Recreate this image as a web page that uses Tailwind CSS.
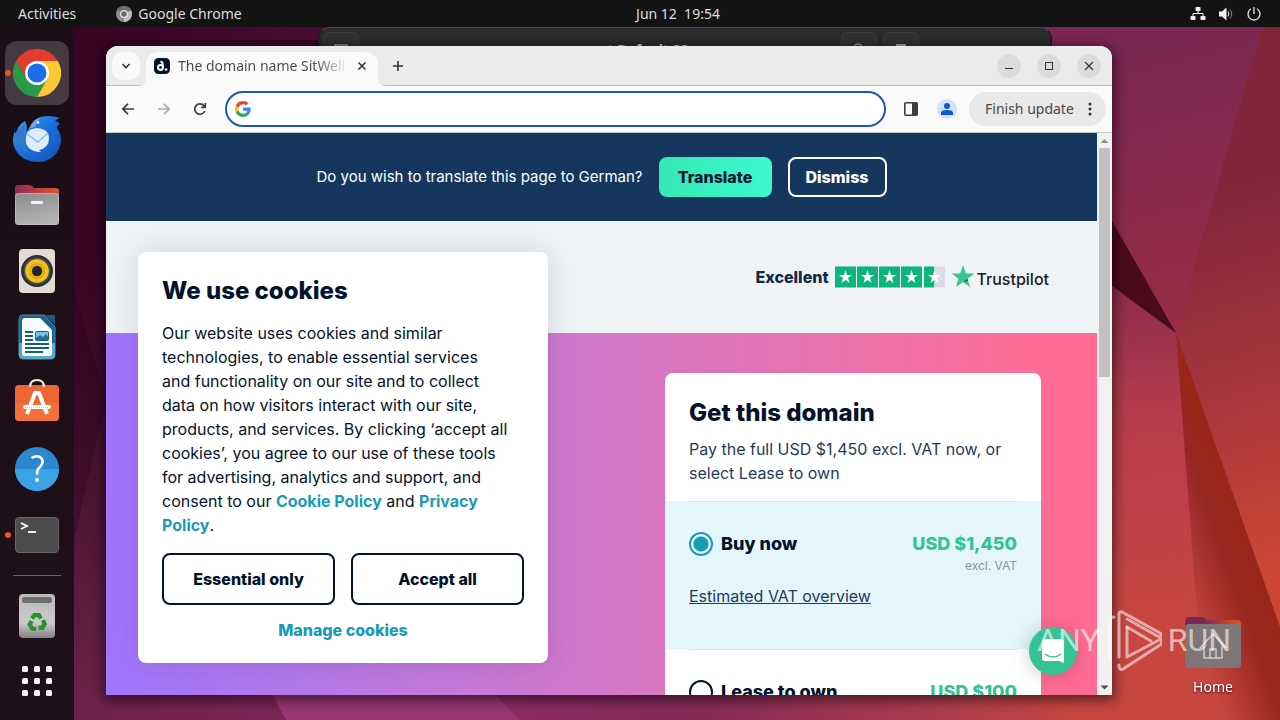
<!DOCTYPE html>
<html lang="en">
<head>
    <meta charset="UTF-8">
    <meta name="viewport" content="width=device-width, initial-scale=1.0">
    <title>Ubuntu Desktop - Google Chrome</title>
    <script src="https://cdn.jsdelivr.net/npm/@tailwindcss/browser@4"></script>
</head>
<body class="relative flex h-screen flex-col overflow-hidden bg-[#3a0525] font-['Noto_Sans',sans-serif] text-sm">

    <!-- Wallpaper -->
    <svg class="absolute inset-0 h-full w-full" viewBox="0 0 1280 720" preserveAspectRatio="none" aria-hidden="true">
        <defs>
            <linearGradient id="wpTop" x1="0" x2="1" y1="0" y2="0">
                <stop offset="0.05" stop-color="#350322"/>
                <stop offset="0.25" stop-color="#4a0c36"/>
                <stop offset="0.84" stop-color="#7d2650"/>
                <stop offset="1" stop-color="#86284a"/>
            </linearGradient>
            <linearGradient id="wpLeft" x1="0" x2="0" y1="0" y2="1">
                <stop offset="0.3" stop-color="#360422"/>
                <stop offset="0.65" stop-color="#48142f"/>
                <stop offset="1" stop-color="#70234d"/>
            </linearGradient>
            <linearGradient id="wpUpper" gradientUnits="userSpaceOnUse" x1="1110" y1="60" x2="1180" y2="330">
                <stop offset="0" stop-color="#7a2652"/>
                <stop offset="1" stop-color="#982d44"/>
            </linearGradient>
            <linearGradient id="wpRight" gradientUnits="userSpaceOnUse" x1="1180" y1="200" x2="1290" y2="560">
                <stop offset="0" stop-color="#80253a"/>
                <stop offset="0.5" stop-color="#a5353c"/>
                <stop offset="1" stop-color="#cc4634"/>
            </linearGradient>
            <linearGradient id="wpLower" gradientUnits="userSpaceOnUse" x1="1120" y1="280" x2="1150" y2="620">
                <stop offset="0" stop-color="#8a2a4a"/>
                <stop offset="0.4" stop-color="#b53c4c"/>
                <stop offset="1" stop-color="#c84640"/>
            </linearGradient>
            <linearGradient id="wpShade" gradientUnits="userSpaceOnUse" x1="1190" y1="620" x2="1262" y2="595">
                <stop offset="0" stop-color="#8c2119" stop-opacity="0"/>
                <stop offset="0.7" stop-color="#8c2119" stop-opacity="0.8"/>
                <stop offset="1" stop-color="#9a2619"/>
            </linearGradient>
            <linearGradient id="wpBottom" x1="0" x2="1" y1="0" y2="0">
                <stop offset="0.05" stop-color="#6c204b"/>
                <stop offset="0.4" stop-color="#8a2b62"/>
                <stop offset="0.55" stop-color="#862a58"/>
                <stop offset="0.75" stop-color="#b03e4c"/>
                <stop offset="0.84" stop-color="#c84640"/>
                <stop offset="0.88" stop-color="#c84640" stop-opacity="0"/>
            </linearGradient>
        </defs>
        <rect width="1280" height="720" fill="url(#wpTop)"/>
        <rect y="40" width="320" height="680" fill="url(#wpLeft)"/>
        <path d="M74 290L106 400 74 540Z" fill="#2c041c" opacity=".35"/>
        <path d="M1000 27H1261L1176 333 1000 60Z" fill="url(#wpUpper)"/>
        <path d="M1262 27H1280V627L1176 333Z" fill="url(#wpRight)"/>
        <path d="M1000 200L1176 333 1280 627V720H1000Z" fill="url(#wpLower)"/>
        <path d="M1176 333L1280 627V720H1205Z" fill="url(#wpShade)"/>
        <path d="M1080 165L1176 333 1100 277Z" fill="#490b1c"/>
        <rect y="694" width="1280" height="26" fill="url(#wpBottom)"/>
        <path d="M265 680H480L520 720H286Z" fill="#9a3672"/>
    </svg>

    <!-- Top bar -->
    <header class="relative grid h-[27px] shrink-0 grid-cols-3 items-center bg-[#131313] px-[18px] text-[#dedede]">
        <div class="flex items-center gap-10">
            <button type="button">Activities</button>
            <button type="button" class="flex items-center gap-1.5">
                <svg class="size-4" viewBox="0 0 16 16" aria-hidden="true">
                    <circle cx="8" cy="8" r="8" fill="#8d8d8d"/>
                    <path d="M8 8L1 4.200A8 8 0 0 1 15 4.200Z" fill="#6f6f6f"/>
                    <path d="M8 8L15 4.200A8 8 0 0 1 8 16Z" fill="#bdbdbd"/>
                    <circle cx="8" cy="8" r="4" fill="#e8e8e8"/>
                    <circle cx="8" cy="8" r="2.800" fill="#6a6a6a"/>
                </svg>
                Google Chrome
            </button>
        </div>
        <button type="button" class="justify-self-center whitespace-pre pl-19">Jun 12  19:54</button>
        <div class="flex items-center gap-3 justify-self-end">
            <button type="button" aria-label="Network">
                <svg class="size-4" viewBox="0 0 16 16" fill="#f2f2f2" aria-hidden="true">
                    <rect x="5.500" y="1" width="5" height="4" rx=".8"/>
                    <rect x="0.500" y="10" width="5" height="4" rx=".8"/>
                    <rect x="10.500" y="10" width="5" height="4" rx=".8"/>
                    <path d="M8 5V7.500M3 10V7.500H13V10" fill="none" stroke="#f2f2f2"/>
                </svg>
            </button>
            <button type="button" aria-label="Volume">
                <svg class="size-4" viewBox="0 0 16 16" fill="none" aria-hidden="true">
                    <path d="M1 5.500H4L8.500 1.500V14.500L4 10.500H1Z" fill="#f2f2f2"/>
                    <path d="M10 5.500Q11.800 8 10 10.500" stroke="#f2f2f2"/>
                    <path d="M12 3.500Q15.500 8 12 12.500" stroke="#8a8a8a"/>
                </svg>
            </button>
            <button type="button" aria-label="Power">
                <svg class="size-4" viewBox="0 0 16 16" fill="none" stroke="#e4e4e4" stroke-width="1.300" aria-hidden="true">
                    <path d="M8 1V8M5 2.800A6 6 0 1 0 11 2.800"/>
                </svg>
            </button>
        </div>
    </header>

    <div class="relative flex min-h-0 flex-1">

        <!-- Dock -->
        <nav aria-label="Dock" class="flex w-[74px] shrink-0 flex-col items-center gap-0.5 bg-[#1b0f17]/95 pt-3.5 pb-2">
            <button type="button" aria-label="Google Chrome" class="relative flex size-16 shrink-0 items-center justify-center rounded-xl bg-[#463a42]">
                <span class="absolute left-0 size-1.5 rounded-full bg-[#e95420]"></span>
                <svg class="size-12" viewBox="0 0 48 48" aria-hidden="true">
                    <path d="M24 12H44.800A24 24 0 0 0 3.200 12L13.600 30Z" fill="#e33b2e"/>
                    <path d="M13.600 30L3.200 12A24 24 0 0 0 24 48L34.400 30Z" fill="#2a9a48"/>
                    <path d="M34.400 30L24 48A24 24 0 0 0 44.800 12H24Z" fill="#fcc934"/>
                    <circle cx="24" cy="24" r="12" fill="#fff"/>
                    <circle cx="24" cy="24" r="9.500" fill="#1a6ee8"/>
                </svg>
            </button>
            <button type="button" aria-label="Thunderbird" class="flex size-16 shrink-0 items-center justify-center">
                <svg class="size-12" viewBox="0 0 48 48" aria-hidden="true">
                    <defs>
                        <linearGradient id="bird" x1="0" x2="1" y1="0" y2="1">
                            <stop offset="0" stop-color="#3aa5f5"/>
                            <stop offset="0.5" stop-color="#1a6fd8"/>
                            <stop offset="1" stop-color="#1450b8"/>
                        </linearGradient>
                    </defs>
                    <path d="M12 6Q15 12 13 17L17 12Q21 1 35 1Q42 1 47 3Q44 4 42 6Q46 7 47 9Q44 10 44 13Q50 22 47 31A23 23 0 0 1 24 47C10 47 0 36 0 25Q0 20 2 16V22Q5 9 12 6Z" fill="url(#bird)"/>
                    <path d="M17 12Q20 5 27 3Q23 8 22 12Q19 12 16 14Z" fill="#8a9fe0"/>
                    <path d="M1 20Q5 33 17 39Q7 27 12 10Q4 15 1 20Z" fill="#3478cc"/>
                    <circle cx="25" cy="7.500" r="1.300" fill="#fff"/>
                    <path d="M13 22Q13 14 24 13Q36 14 36 23Q36 33 26 35L28 37Q19 37 15 32Q12 28 13 22Z" fill="#dceefb"/>
                    <path d="M14 19L25 27 35 18" fill="none" stroke="#8fb8dc" stroke-width="1.500"/>
                </svg>
            </button>
            <button type="button" aria-label="Files" class="flex size-16 shrink-0 items-center justify-center">
                <svg class="size-12" viewBox="0 0 48 48" aria-hidden="true">
                    <defs>
                        <linearGradient id="folderBack" x1="0" x2="1" y1="0" y2="0">
                            <stop offset="0" stop-color="#8d2c55"/>
                            <stop offset="1" stop-color="#e6502a"/>
                        </linearGradient>
                        <linearGradient id="folderFront" x1="0" x2="0.300" y1="0" y2="1">
                            <stop offset="0" stop-color="#8b8b8b"/>
                            <stop offset="1" stop-color="#b2b2b2"/>
                        </linearGradient>
                    </defs>
                    <path d="M2 20V7Q2 4 5 4H16Q19 4 21 7H43Q46 7 46 10V20Z" fill="url(#folderBack)"/>
                    <rect x="2" y="12" width="44" height="32" rx="3.500" fill="url(#folderFront)"/>
                    <rect x="2.500" y="12.500" width="43" height="31" rx="3" fill="none" stroke="#c4c4c4" stroke-opacity=".6"/>
                    <rect x="18" y="20" width="12" height="3" rx="1" fill="#f4f4f4"/>
                </svg>
            </button>
            <button type="button" aria-label="Rhythmbox" class="flex size-16 shrink-0 items-center justify-center">
                <svg class="size-12" viewBox="0 0 48 48" aria-hidden="true">
                    <rect x="6" y="2" width="36" height="44" rx="4" fill="#e3dcd2"/>
                    <circle cx="24" cy="24" r="16" fill="#2c3038"/>
                    <circle cx="24" cy="24" r="13.500" fill="#4d4e50"/>
                    <circle cx="24" cy="24" r="11.800" fill="#f2c11e"/>
                    <circle cx="24" cy="24" r="7" fill="none" stroke="#dfa90f" stroke-width="2"/>
                    <circle cx="24" cy="24" r="5.200" fill="#20242c"/>
                </svg>
            </button>
            <button type="button" aria-label="LibreOffice Writer" class="flex size-16 shrink-0 items-center justify-center">
                <svg class="size-12" viewBox="0 0 48 48" aria-hidden="true">
                    <path d="M10 2H31L42 14V42Q42 46 38 46H10Q6 46 6 42V6Q6 2 10 2Z" fill="#1d6288" stroke="#3b9abf" stroke-width="1"/>
                    <path d="M6 30H42V42Q42 46 38 46H10Q6 46 6 42Z" fill="#5aa9c6"/>
                    <path d="M32 2H42V12Z" fill="#195a80"/>
                    <path d="M12 5H27L39 17V40Q39 43 36 43H12Q9 43 9 40V8Q9 5 12 5Z" fill="#f8fbfc"/>
                    <path d="M12 19H20M12 23H20M12 27H20M12 31H36M12 35H36M12 39H30" stroke="#1b5b80" stroke-width="2"/>
                    <rect x="22.500" y="18.500" width="13" height="9" rx="1" fill="#7cc3ea" stroke="#1b5b80"/>
                    <path d="M23 27V25L27 22 30 24 33 21 35 24V27Z" fill="#1f6d9c"/>
                </svg>
            </button>
            <button type="button" aria-label="Ubuntu Software" class="flex size-16 shrink-0 items-center justify-center">
                <svg class="size-12" viewBox="0 0 48 48" aria-hidden="true">
                    <path d="M17 8Q17 1 24 1T31 8" fill="none" stroke="#f6e6d8" stroke-width="2"/>
                    <rect x="2" y="6" width="44" height="36" rx="4" fill="#ee6733"/>
                    <path d="M2 24H46V38Q46 42 42 42H6Q2 42 2 38Z" fill="#f47a45" opacity=".5"/>
                    <path d="M17 8Q17 6 18 5M31 8Q31 6 30 5" stroke="#f6e6d8" stroke-width="2"/>
                    <path d="M14 35L22 14H26L34 35" fill="none" stroke="#fff" stroke-width="4"/>
                    <path d="M12 28H36" stroke="#fff" stroke-width="4" stroke-linecap="round"/>
                    <path d="M12 28.500H36" stroke="#f3b598" stroke-dasharray="1 1"/>
                </svg>
            </button>
            <button type="button" aria-label="Help" class="flex size-16 shrink-0 items-center justify-center">
                <svg class="size-12" viewBox="0 0 48 48" aria-hidden="true">
                    <circle cx="24" cy="24" r="22" fill="#2c87d0"/>
                    <path d="M2 24A22 22 0 0 0 46 24Z" fill="#3ba2e6"/>
                    <path d="M18.500 13Q23 10 27 12Q31 15 29 19Q28 21 25.500 23.500Q24 25 24 29.500" fill="none" stroke="#fff" stroke-width="2.600"/>
                    <circle cx="24" cy="35" r="2" fill="#fff"/>
                </svg>
            </button>
            <button type="button" aria-label="Terminal" class="relative flex size-16 shrink-0 items-center justify-center">
                <span class="absolute left-0 size-1.5 rounded-full bg-[#e95420]"></span>
                <svg class="size-12" viewBox="0 0 48 48" aria-hidden="true">
                    <rect x="2.500" y="6.500" width="43" height="35" rx="3.500" fill="#4c4c4c" stroke="#676767"/>
                    <path d="M8 12L14 15 8 18" fill="none" stroke="#fff" stroke-width="1.800"/>
                    <path d="M15 21H23" stroke="#fff" stroke-width="1.800"/>
                </svg>
            </button>
            <hr class="my-1.5 w-12 shrink-0 border-[#6d646a]">
            <button type="button" aria-label="Trash" class="flex size-16 shrink-0 items-center justify-center">
                <svg class="size-12" viewBox="0 0 48 48" aria-hidden="true">
                    <defs>
                        <linearGradient id="bin" x1="0" x2="0" y1="0" y2="1">
                            <stop offset="0" stop-color="#b9b9b9"/>
                            <stop offset="0.650" stop-color="#cbcbcb"/>
                            <stop offset="1" stop-color="#858085"/>
                        </linearGradient>
                    </defs>
                    <rect x="6" y="2" width="36" height="44" rx="4" fill="url(#bin)"/>
                    <rect x="9" y="5" width="30" height="6" rx="2.500" fill="#6d6d6d"/>
                    <g fill="none" stroke="#259428" stroke-width="4.200">
                        <path d="M19 26.500L21.300 23.200H26L28 26.500"/>
                        <path d="M19 26.500L21.300 23.200H26L28 26.500" transform="rotate(120 24 30.500)"/>
                        <path d="M19 26.500L21.300 23.200H26L28 26.500" transform="rotate(240 24 30.500)"/>
                    </g>
                </svg>
            </button>
            <button type="button" aria-label="Show Applications" class="flex w-16 flex-1 items-center justify-center">
                <svg class="size-8" viewBox="0 0 32 32" fill="#fdf4f8" aria-hidden="true">
                    <rect x="1" y="1" width="6" height="6" rx="1.500"/><rect x="13" y="1" width="6" height="6" rx="1.500"/><rect x="25" y="1" width="6" height="6" rx="1.500"/>
                    <rect x="1" y="13" width="6" height="6" rx="1.500"/><rect x="13" y="13" width="6" height="6" rx="1.500"/><rect x="25" y="13" width="6" height="6" rx="1.500"/>
                    <rect x="1" y="25" width="6" height="6" rx="1.500"/><rect x="13" y="25" width="6" height="6" rx="1.500"/><rect x="25" y="25" width="6" height="6" rx="1.500"/>
                </svg>
            </button>
        </nav>

        <div class="relative min-w-0 flex-1">

            <!-- Terminal window in the background -->
            <section aria-label="Terminal" class="absolute top-0 right-[228px] left-[244px] h-64 rounded-t-xl border border-[#1a1a1a] border-t-[#464646] bg-[#2b2b2b]">
                <div class="flex h-11 items-center justify-between px-1 text-[#c8c8c8]">
                    <button type="button" aria-label="New tab" class="flex size-9 items-center justify-center rounded-md border border-[#3d3d3d] bg-[#313131]">
                        <svg class="size-4" viewBox="0 0 16 16" fill="none" stroke="#c8c8c8" aria-hidden="true"><rect x="2" y="3" width="12" height="10"/></svg>
                    </button>
                    <span class="pl-24 text-sm font-bold">t Default 22</span>
                    <div class="mr-32 flex gap-1.5">
                        <button type="button" aria-label="Search" class="flex size-9 items-center justify-center rounded-md border border-[#3d3d3d] bg-[#313131]">
                            <svg class="size-4" viewBox="0 0 16 16" fill="none" stroke="#c8c8c8" aria-hidden="true"><circle cx="7" cy="7" r="5"/><path d="M11 11L15 15"/></svg>
                        </button>
                        <button type="button" aria-label="Menu" class="flex size-9 items-center justify-center rounded-md border border-[#3d3d3d] bg-[#313131]">
                            <svg class="size-4" viewBox="0 0 16 16" stroke="#c8c8c8" stroke-width="1.500" aria-hidden="true"><path d="M3 3H13M3 8H13M3 13H13"/></svg>
                        </button>
                    </div>
                </div>
            </section>

            <!-- Home folder -->
            <a href="#home" class="absolute right-[35px] bottom-[23px] flex w-16 flex-col items-center gap-1.5 text-white">
                <svg class="h-14 w-16" viewBox="0 0 64 56" aria-hidden="true">
                    <defs>
                        <linearGradient id="homeBack" x1="0" x2="1" y1="0" y2="0">
                            <stop offset="0.300" stop-color="#7a2458"/>
                            <stop offset="1" stop-color="#e65424"/>
                        </linearGradient>
                    </defs>
                    <path d="M4 20V6Q4 2 8 2H20Q24 2 26 5H56Q60 5 60 9V20Z" fill="url(#homeBack)"/>
                    <rect x="4" y="9" width="56" height="44" rx="4" fill="#7d7577"/>
                    <path d="M19 33L32 19 45 33M23 31V43H41V31M29 43V34H35V43" fill="none" stroke="#cfcaca" stroke-width="1.500"/>
                </svg>
                <span class="leading-5 drop-shadow-[0_1px_1px_rgba(0,0,0,0.8)]">Home</span>
            </a>

            <!-- Chrome window -->
            <section aria-label="Google Chrome" class="absolute top-[19px] right-[168px] bottom-[25px] left-8 flex flex-col overflow-hidden rounded-t-xl bg-[#fafafa] text-[#474747] shadow-[0_3px_12px_3px_rgba(0,0,0,0.5)]">

                <!-- Tab strip -->
                <div class="flex h-10 shrink-0 items-center border-b border-[#bdbdbd] bg-[#ebebeb] pr-[11px] pl-1.5">
                    <button type="button" aria-label="Search tabs" class="flex size-7 items-center justify-center rounded-[10px] bg-[#f9f9f9]">
                        <svg class="size-3" viewBox="0 0 12 12" fill="none" stroke="#333" stroke-width="1.600" aria-hidden="true"><path d="M2.500 4L6 7.500 9.500 4"/></svg>
                    </button>
                    <div class="relative -mb-px ml-1.5 flex h-[34px] w-[232px] items-center gap-2 self-end rounded-t-xl bg-[#fafafa] pr-2.5 pb-1.5 pl-2">
                        <svg class="absolute bottom-0 -left-2 size-2" viewBox="0 0 8 8" aria-hidden="true"><path d="M0 8Q8 8 8 0V8Z" fill="#fafafa"/></svg>
                        <svg class="absolute -right-2 bottom-0 size-2" viewBox="0 0 8 8" aria-hidden="true"><path d="M8 8Q0 8 0 0V8Z" fill="#fafafa"/></svg>
                        <svg class="size-4 shrink-0" viewBox="0 0 16 16" aria-hidden="true">
                            <rect width="16" height="16" rx="4.500" fill="#03132d"/>
                            <circle cx="6.500" cy="9.500" r="2.400" fill="none" stroke="#fff" stroke-width="2"/>
                            <path d="M6.500 3.500Q8.800 4 8.800 7V10" fill="none" stroke="#fff" stroke-width="1.800"/>
                            <circle cx="12" cy="11.500" r="1.300" fill="#fff"/>
                        </svg>
                        <span class="min-w-0 flex-1 overflow-hidden bg-linear-to-r from-[#474747] from-80% to-[#fafafa] bg-clip-text whitespace-nowrap text-transparent">The domain name SitWell.de is for sale</span>
                        <button type="button" aria-label="Close tab" class="flex size-3 items-center justify-center">
                            <svg class="size-3" viewBox="0 0 12 12" stroke="#333" stroke-width="1.600" aria-hidden="true"><path d="M2.500 2.500L9.500 9.500M9.500 2.500L2.500 9.500"/></svg>
                        </button>
                    </div>
                    <button type="button" aria-label="New tab" class="ml-1.5 flex size-7 items-center justify-center">
                        <svg class="size-3" viewBox="0 0 12 12" stroke="#333" stroke-width="1.600" aria-hidden="true"><path d="M6 1V11M1 6H11"/></svg>
                    </button>
                    <div class="ml-auto flex gap-4">
                        <button type="button" aria-label="Minimize" class="flex size-6 items-center justify-center rounded-full bg-[#dcdcdc]">
                            <svg class="size-3" viewBox="0 0 12 12" stroke="#333" aria-hidden="true"><path d="M2 8.500H10"/></svg>
                        </button>
                        <button type="button" aria-label="Maximize" class="flex size-6 items-center justify-center rounded-full bg-[#dcdcdc]">
                            <svg class="size-3" viewBox="0 0 12 12" fill="none" stroke="#333" aria-hidden="true"><rect x="2.500" y="2.500" width="7" height="7"/></svg>
                        </button>
                        <button type="button" aria-label="Close" class="flex size-6 items-center justify-center rounded-full bg-[#dcdcdc]">
                            <svg class="size-3" viewBox="0 0 12 12" stroke="#333" stroke-width="1.200" aria-hidden="true"><path d="M2 2L10 10M10 2L2 10"/></svg>
                        </button>
                    </div>
                </div>

                <!-- Toolbar -->
                <div class="flex h-[47px] shrink-0 items-center gap-2 border-b border-[#c9c9c9] pr-1.5 pl-2">
                    <button type="button" aria-label="Back" class="flex size-7 items-center justify-center">
                        <svg class="size-4" viewBox="0 0 16 16" fill="none" stroke="#3c3c3c" stroke-width="1.700" aria-hidden="true"><path d="M14 8H3M8 2.800L2.800 8 8 13.200"/></svg>
                    </button>
                    <button type="button" aria-label="Forward" class="flex size-7 items-center justify-center">
                        <svg class="size-4" viewBox="0 0 16 16" fill="none" stroke="#a9a9a9" stroke-width="1.700" aria-hidden="true"><path d="M2 8H13M8 2.800L13.200 8 8 13.200"/></svg>
                    </button>
                    <button type="button" aria-label="Reload" class="flex size-7 items-center justify-center">
                        <svg class="size-4" viewBox="0 0 16 16" fill="none" stroke="#3c3c3c" stroke-width="1.700" aria-hidden="true"><path d="M12.800 10A5.200 5.200 0 1 1 12 4.700L13 6M13.300 2V6.300H9"/></svg>
                    </button>
                    <label class="ml-[3px] flex h-9 min-w-0 flex-1 items-center gap-2 rounded-full border-2 border-[#1f57b3] bg-white px-2">
                        <svg class="size-4 shrink-0" viewBox="0 0 18 18" aria-hidden="true">
                            <path fill="#4285F4" d="M17.640 9.200c0-.640-.060-1.250-.160-1.840H9v3.480h4.840a4.140 4.140 0 0 1-1.800 2.720v2.260h2.920c1.700-1.570 2.680-3.880 2.680-6.620z"/>
                            <path fill="#34A853" d="M9 18c2.430 0 4.470-.8 5.960-2.180l-2.920-2.260c-.8.540-1.840.860-3.040.860-2.340 0-4.330-1.580-5.040-3.710H.960v2.330A9 9 0 0 0 9 18z"/>
                            <path fill="#FBBC05" d="M3.960 10.710a5.400 5.400 0 0 1 0-3.420V4.960H.960a9 9 0 0 0 0 8.080z"/>
                            <path fill="#EA4335" d="M9 3.580c1.320 0 2.500.450 3.440 1.350l2.580-2.590A9 9 0 0 0 .960 4.960l3 2.330C4.670 5.160 6.660 3.580 9 3.580z"/>
                        </svg>
                        <input type="text" aria-label="Address and search bar" class="min-w-0 flex-1 bg-transparent outline-none">
                    </label>
                    <button type="button" aria-label="Side panel" class="ml-[3px] flex size-7 items-center justify-center">
                        <svg class="size-4" viewBox="0 0 16 16" aria-hidden="true"><rect x="1.800" y="1.800" width="12.400" height="12.400" rx="1" fill="none" stroke="#3c3c3c" stroke-width="1.600"/><path d="M9 2H14V14H9Z" fill="#3c3c3c"/></svg>
                    </button>
                    <button type="button" aria-label="Profile" class="flex size-7 items-center justify-center">
                        <svg class="size-5" viewBox="0 0 20 20" aria-hidden="true"><circle cx="10" cy="10" r="10" fill="#d3e3fd"/><circle cx="10" cy="7" r="3" fill="#0b57d0"/><path d="M4 16V14Q4 11 10 11T16 14V16Z" fill="#0b57d0"/></svg>
                    </button>
                    <button type="button" class="flex h-[34px] w-[137px] items-center justify-between rounded-full bg-[#e9e9e9] pr-2 pl-4">
                        Finish update
                        <svg class="size-4" viewBox="0 0 16 16" fill="#333" aria-hidden="true"><circle cx="8" cy="3" r="1.500"/><circle cx="8" cy="8" r="1.500"/><circle cx="8" cy="13" r="1.500"/></svg>
                    </button>
                </div>

                <!-- Web page -->
                <div class="flex min-h-0 flex-1 font-['Inter',sans-serif] text-base text-[#03132d]">
                    <div class="relative flex min-w-0 flex-1 flex-col overflow-hidden bg-[#f0f3f5]">
                        <div class="flex h-[88px] shrink-0 items-center justify-center gap-4 bg-[#16375d] text-white">
                            <p class="text-[15px]">Do you wish to translate this page to German?</p>
                            <button type="button" class="h-10 w-[113px] rounded-lg bg-linear-to-r from-[#36e8b4] to-[#3df8d0] font-extrabold text-[#03132d]">Translate</button>
                            <button type="button" class="h-10 w-[99px] rounded-lg border-2 border-white font-extrabold">Dismiss</button>
                        </div>

                        <div class="flex h-28 shrink-0 items-center justify-end pr-12">
                            <a href="#trustpilot" class="flex items-center gap-1.5">
                                <span class="font-extrabold text-[#12294b]">Excellent</span>
                                <svg class="h-[22px] w-[110px]" viewBox="0 0 110 22" aria-label="4.5 out of 5 stars">
                                    <path d="M0 0.500H21V21.500H0ZM22 0.500H43V21.500H22ZM44 0.500H65V21.500H44ZM66 0.500H87V21.500H66ZM89 0.500H99.500V21.500H89Z" fill="#0bb57c"/>
                                    <path d="M99.500 0.500H110V21.500H99.500Z" fill="#dcdce6"/>
                                    <g fill="#fff">
                                        <path id="rate" d="M10.500 4L12 9H17L13 12 14.500 17 10.500 14 6.500 17 8 12 4 9H9Z"/>
                                        <use href="#rate" x="22"/>
                                        <use href="#rate" x="44"/>
                                        <use href="#rate" x="66"/>
                                        <use href="#rate" x="89"/>
                                    </g>
                                </svg>
                                <span class="flex items-center gap-0.5">
                                    <svg class="size-6" viewBox="0 0 24 24" aria-hidden="true">
                                        <path d="M12 0L14.800 8.500H23.500L16.500 13.800 19 22 12 17 5 22 7.500 13.800 0.500 8.500H9.200Z" fill="#3bc492"/>
                                        <path d="M17.200 16L16.500 13.800 12 17Z" fill="#126a4c"/>
                                    </svg>
                                    <span class="pt-1 font-medium text-[#1b1b2c]">Trustpilot</span>
                                </span>
                            </a>
                        </div>

                        <main class="flex min-h-0 flex-1 items-start justify-end bg-linear-to-r from-[#a076ff] to-[#ff6c93] to-95% pt-10 pr-14">
                            <form class="w-[376px] rounded-t-lg bg-white">
                                <div class="px-6 pt-6">
                                    <h2 class="text-2xl leading-8 font-extrabold">Get this domain</h2>
                                    <p class="mt-2 pb-4 text-[#1f3a60]">Pay the full USD $1,450 excl. VAT now, or select Lease to own</p>
                                </div>
                                <div class="bg-[#e4f6fb] px-6">
                                    <div class="h-[148px] border-t border-[#d5dfe5] pt-[30px]">
                                        <div class="flex items-center gap-2 text-lg leading-6 font-extrabold">
                                            <input id="buyNow" type="radio" name="plan" checked class="size-6 appearance-none rounded-full border-2 border-[#1a9bb5] bg-[radial-gradient(circle,#1a9bb5_7px,#e4f6fb_8px)]">
                                            <label for="buyNow">Buy now</label>
                                            <span class="ml-auto text-[#34c394]">USD $1,450</span>
                                        </div>
                                        <p class="text-right text-xs leading-5 text-[#8795a5]">excl. VAT</p>
                                        <a href="#vat" class="mt-2 inline-block leading-6 text-[#1f3a60] underline">Estimated VAT overview</a>
                                    </div>
                                </div>
                                <div class="px-6">
                                    <div class="flex items-center gap-2 border-t border-[#dfe3e8] pt-[30px] pb-6 text-lg leading-6 font-extrabold">
                                        <input id="leaseToOwn" type="radio" name="plan" class="size-6 appearance-none rounded-full border-2 border-[#03132d]">
                                        <label for="leaseToOwn">Lease to own</label>
                                        <span class="ml-auto text-[#34c394]">USD $100</span>
                                    </div>
                                </div>
                            </form>
                        </main>

                        <!-- Cookie dialog -->
                        <div role="dialog" aria-labelledby="cookieTitle" class="absolute bottom-8 left-8 w-[410px] rounded-lg bg-white p-6 shadow-[0_0_32px_rgba(0,0,0,0.12)]">
                            <h2 id="cookieTitle" class="mb-4 text-2xl leading-[29px] font-extrabold">We use cookies</h2>
                            <p class="mb-4">
                                Our website uses cookies and similar<br>
                                technologies, to enable essential services<br>
                                and functionality on our site and to collect<br>
                                data on how visitors interact with our site,<br>
                                products, and services. By clicking ‘accept all<br>
                                cookies’, you agree to our use of these tools<br>
                                for advertising, analytics and support, and<br>
                                consent to our <a href="#cookies" class="font-bold text-[#1a9bb5]">Cookie Policy</a> and <a href="#privacy" class="font-bold text-[#1a9bb5]">Privacy<br>Policy</a>.
                            </p>
                            <div class="grid grid-cols-2 gap-4">
                                <button type="button" class="h-[52px] rounded-lg border-2 border-[#03132d] font-extrabold">Essential only</button>
                                <button type="button" class="h-[52px] rounded-lg border-2 border-[#03132d] font-extrabold">Accept all</button>
                            </div>
                            <button type="button" class="mx-auto mt-4 block leading-[18px] font-extrabold text-[#1a9bb5]">Manage cookies</button>
                        </div>

                        <!-- Chat launcher -->
                        <button type="button" aria-label="Open chat" class="absolute right-5 bottom-5 flex size-12 items-center justify-center rounded-full bg-[#34c394] shadow-[0_1px_20px_rgba(0,0,0,0.2)]">
                            <svg class="size-6" viewBox="0 0 24 24" aria-hidden="true">
                                <path d="M3 0H20Q23 0 23 3V24L18 22H4Q1 22 1 19V3Q1 0 3 0Z" fill="#fff"/>
                                <path d="M4 15Q12 21 20 15" fill="none" stroke="#34c394" stroke-width="1.500"/>
                            </svg>
                        </button>
                    </div>

                    <!-- Scrollbar -->
                    <div class="flex w-[15px] shrink-0 flex-col items-center bg-[#f1f1f1]" aria-hidden="true">
                        <svg class="size-[15px]" viewBox="0 0 15 15"><path d="M3.500 10L7.500 6 11.500 10Z" fill="#8f8f8f"/></svg>
                        <div class="h-[229px] w-[11px] bg-[#c1c1c1]"></div>
                        <svg class="mt-auto size-[15px]" viewBox="0 0 15 15"><path d="M3.500 5.500L7.500 9.500 11.500 5.500Z" fill="#4c4c4c"/></svg>
                    </div>
                </div>
            </section>

            <!-- Watermark -->
            <div class="pointer-events-none absolute right-[49px] bottom-[47px] flex h-16 items-center gap-1.5 font-['Roboto',sans-serif] text-[32px] text-white/60">
                <span>ANY</span>
                <svg class="h-16 w-14" viewBox="0 0 56 64" fill="none" stroke="#fff" stroke-opacity=".55" stroke-width="3" stroke-linejoin="round" stroke-linecap="round" aria-hidden="true">
                    <path d="M4 52V12Q4 8 8 8"/>
                    <path d="M13 48V5Q13 2 16 3L54 24Q57 26 53 28L21 10"/>
                    <path d="M21 18V48L55 30Q57 34 54 36L17 60Q13 62 13 56"/>
                    <path d="M21 18L45 32"/>
                </svg>
                <span>RUN</span>
            </div>
        </div>
    </div>
</body>
</html>
